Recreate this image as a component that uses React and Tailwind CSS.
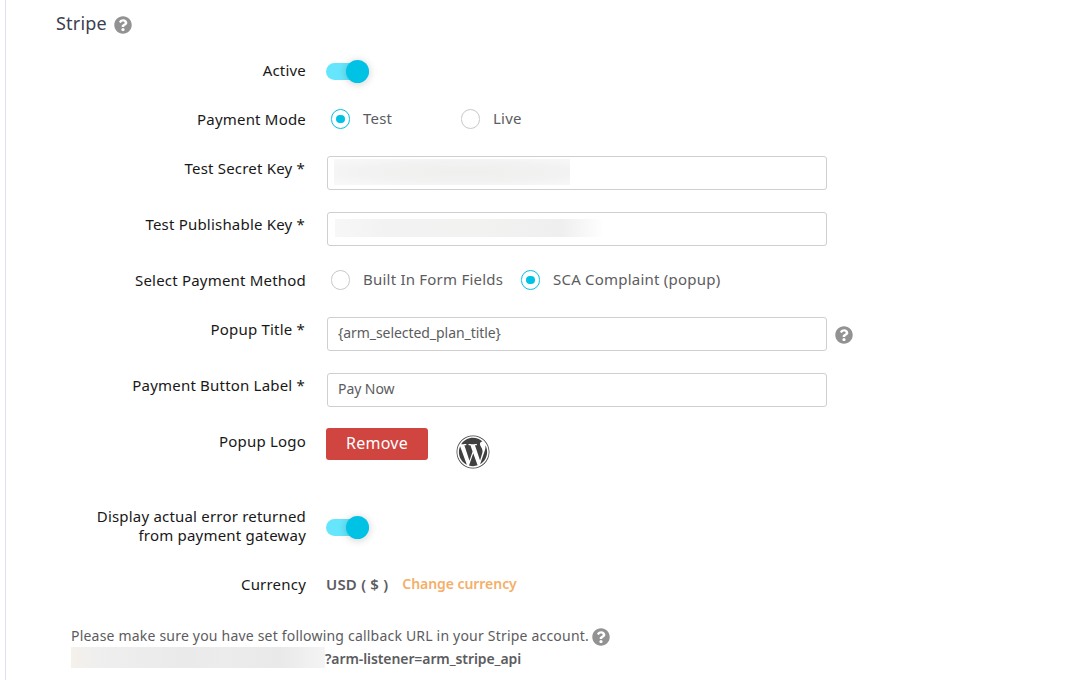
import { FaQuestionCircle, FaWordpress } from "react-icons/fa";

const Help = ({ className = "" }) => (
  <FaQuestionCircle className={`h-[18px] w-[18px] shrink-0 text-[#929292] ${className}`} />
);

function Row({ label, height, labelClass = "", children }) {
  return (
    <div className={`flex items-center ${height}`}>
      <div className={`w-[300px] shrink-0 text-right text-[15px] leading-[19px] tracking-[0.2px] text-[#191818] ${labelClass}`}>
        {label}
      </div>
      <div className="ml-5 flex items-center">{children}</div>
    </div>
  );
}

const Toggle = () => (
  <div className="flex h-[23px] w-[43px] items-center">
    <div className="flex h-[17px] w-[43px] items-center justify-end rounded-full bg-[#66e6fc]">
      <div className="h-[23px] w-[23px] shrink-0 rounded-full bg-[#00c2e5] shadow-[0_1px_8px_rgba(0,0,0,0.2)]" />
    </div>
  </div>
);

function Radio({ checked, label, className = "" }) {
  return (
    <div className={`flex items-center ${className}`}>
      <div className={`flex h-5 w-[19px] shrink-0 items-center justify-center rounded-full border ${checked ? "border-[#00c2e5]" : "border-[#c8c8c8]"}`}>
        {checked && <div className="h-2 w-[9px] rounded-full bg-[#00c2e5]" />}
      </div>
      <span className="ml-[13px] whitespace-nowrap pb-0.5 text-[15px] leading-5 tracking-[0.22px] text-[#5c5c60]">{label}</span>
    </div>
  );
}

const Field = ({ children }) => (
  <div className="ml-px flex h-[34px] w-[500px] items-center rounded-[3px] border border-[#cfcfcf] bg-white text-sm tracking-[-0.06px] text-[#5c5c60]">
    {children}
  </div>
);

export default function App() {
  return (
    <main className="h-[680px] w-[1070px] overflow-hidden bg-white pl-[5px] font-['Noto_Sans',sans-serif]">
      <div className="h-full border-l border-[#dfdfee]">
        <div className="flex h-12 items-center pl-[50px]">
          <h2 className="pb-0.5 text-[18px] leading-6 tracking-[0.2px] text-[#3c3e4f]">Stripe</h2>
          <Help className="ml-[7.5px] mt-0.5" />
        </div>
        <Row label="Active" height="h-[47px]" labelClass="pb-0.5"><Toggle /></Row>
        <Row label="Payment Mode" height="h-12" labelClass="pt-px">
          <Radio checked label="Test" className="ml-[5px] w-[130px]" />
          <Radio label="Live" />
        </Row>
        <Row label="Test Secret Key *" height="h-[60px]" labelClass="pb-2.5 pr-px">
          <Field>
            <div className="ml-[6px] mb-0.5 h-[26px] w-[236px] bg-[radial-gradient(ellipse_at_55%_50%,#efefed_0%,#f2f2f2_55%,#f9f9f9_100%)]" />
          </Field>
        </Row>
        <Row label="Test Publishable Key *" height="h-[52px]" labelClass="pb-2.5 pr-px">
          <Field>
            <div className="ml-[7px] mb-0.5 h-[18px] w-[267px] bg-[linear-gradient(90deg,#f7f7f7_0%,#f2f2f2_20%,#f2f2f1_55%,#efefef_85%,#fefefe_100%)]" />
          </Field>
        </Row>
        <Row label="Select Payment Method" height="h-[50px]" labelClass="pt-px">
          <Radio label="Built In Form Fields" className="ml-[5px] w-[190px]" />
          <Radio checked label="SCA Complaint (popup)" />
        </Row>
        <Row label="Popup Title *" height="h-[58px]" labelClass="pb-2.5 pr-px">
          <Field><span className="pl-[10px] pb-0.5">{"{arm_selected_plan_title}"}</span></Field>
          <Help className="ml-[7.5px] mt-0.5" />
        </Row>
        <Row label="Payment Button Label *" height="h-[54px]" labelClass="pb-2.5 pr-px">
          <Field><span className="pl-[10px] pb-0.5">Pay Now</span></Field>
        </Row>
        <Row label="Popup Logo" height="h-[54px]" labelClass="pb-1.5">
          <button className="h-8 w-[102px] rounded-[3px] bg-[#d04540] pb-0.5 text-base tracking-[0.3px] text-white">Remove</button>
          <FaWordpress className="ml-[28px] mt-4 h-[34px] w-[34px] text-[#404040]" />
        </Row>
        <Row
          label={<>Display actual error returned<br />from payment gateway</>}
          height="h-[112px]"
          labelClass="pb-0.5"
        ><Toggle /></Row>
        <Row label="Currency" height="h-1" labelClass="pb-px">
          <span className="whitespace-nowrap pb-0.5 text-[15px] font-semibold tracking-[0.2px] text-[#5c5c60]">USD ( $ )</span>
          <span className="ml-[14px] whitespace-nowrap pb-0.5 text-sm font-semibold tracking-[-0.05px] text-[#f4af69]">Change currency</span>
        </Row>
        <div className="pl-[65px] pt-[37px] text-sm text-[#5c5c60]">
          <div className="flex h-6 items-center">
            <span className="tracking-[0.2px]">Please make sure you have set following callback URL in your Stripe account.</span>
            <Help className="ml-[3px] mt-0.5" />
          </div>
          <div className="flex h-[21px] items-center">
            <div className="mb-0.5 h-[21px] w-[254px] bg-[linear-gradient(90deg,#f5f1eb_0%,#efefef_10%,#eaeaea_45%,#ececec_60%,#e9e9e9_82%,#f4f4f4_100%)]" />
            <span className="font-semibold tracking-[-0.09px]">?arm-listener=arm_stripe_api</span>
          </div>
        </div>
      </div>
    </main>
  );
}
